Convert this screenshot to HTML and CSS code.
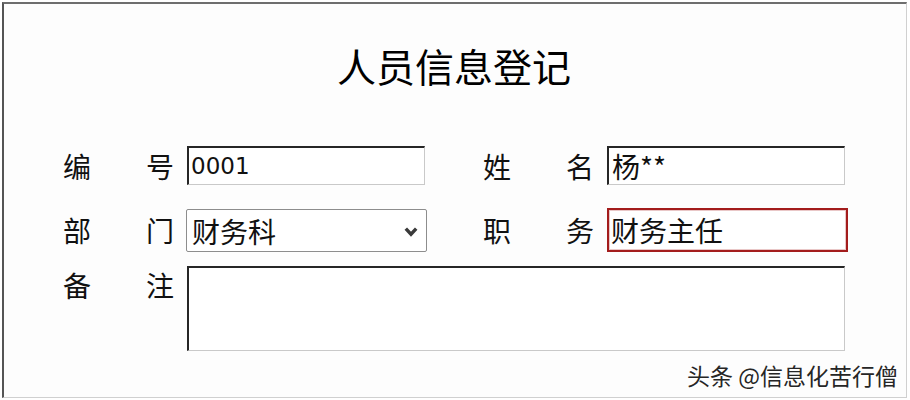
FILE: index.html
```html
<!DOCTYPE html>
<html lang="zh-CN">
<head>
<meta charset="utf-8">
<title>人员信息登记</title>
<link rel="stylesheet" href="styles.css">
</head>
<body>
<div class="frame">
  <h1 class="title">人员信息登记</h1>
  <div class="form">
    <div class="row row-1">
      <div class="label"><span>编</span><span>号</span></div>
      <input class="field field-num" type="text" value="0001">
      <div class="label label-right"><span>姓</span><span>名</span></div>
      <input class="field" type="text" value="杨**">
    </div>
    <div class="row row-2">
      <div class="label"><span>部</span><span>门</span></div>
      <div class="select">
        <span class="select-text">财务科</span>
        <svg class="chevron" width="14" height="12" viewBox="0 0 14 12"><path d="M1.8 2.6 L7 8.2 L12.2 2.6" fill="none" stroke="#3a3a3a" stroke-width="3.4" stroke-linecap="butt" stroke-linejoin="miter"/></svg>
      </div>
      <div class="label label-right2"><span>职</span><span>务</span></div>
      <input class="field field-focus" type="text" value="财务主任">
    </div>
    <div class="row row-3">
      <div class="label label-top"><span>备</span><span>注</span></div>
      <textarea class="notes"></textarea>
    </div>
  </div>
  <div class="watermark">头条 @信息化苦行僧</div>
</div>
</body>
</html>
```

FILE: styles.css
```css
html, body {
  margin: 0;
  padding: 0;
  background: #ffffff;
}

body {
  font-family: "Noto Sans CJK SC", "Noto Sans", sans-serif;
  color: #111111;
}

.frame {
  position: relative;
  box-sizing: border-box;
  width: 905px;
  height: 396px;
  margin: 2px 3px 2px 2px;
  border-top: 2px solid #6e6e6e;
  border-left: 2px solid #555555;
  border-right: 1px solid #d0d0d0;
  border-bottom: 1px solid #d0d0d0;
  background: #fdfdfd;
  padding: 42px 0 0 59px;
}

.title {
  margin: 0;
  font-size: 39px;
  line-height: 39px;
  font-weight: 400;
  color: #000;
  text-align: center;
  width: 782px;
  letter-spacing: 0;
}

.form {
  margin-top: 61px;
}

.row {
  display: flex;
  align-items: center;
}

.row-1 {
  height: 39px;
}

.row-2 {
  height: 44px;
  margin-top: 23px;
}

.row-3 {
  margin-top: 14px;
  align-items: flex-start;
}

.label {
  width: 111px;
  display: flex;
  justify-content: space-between;
  font-size: 28px;
  line-height: 38px;
  color: #111;
  flex: none;
}

.label-top {
  margin-top: 0;
}

.row-1 .label:first-child,
.row-3 .label:first-child {
  margin-right: 13px;
}

.row-2 .label:first-child {
  margin-right: 12px;
}

.label-right {
  margin-left: 58px;
  margin-right: 13px;
}

.label-right2 {
  margin-left: 56px;
  margin-right: 13px;
}

.field {
  box-sizing: border-box;
  width: 238px;
  height: 39px;
  margin: 0;
  padding: 0 0 0 3px;
  border-top: 2px solid #262626;
  border-left: 2px solid #262626;
  border-right: 1px solid #c9c9c9;
  border-bottom: 1px solid #c9c9c9;
  background: #ffffff;
  font-family: "Noto Sans CJK SC", sans-serif;
  font-size: 28px;
  color: #111;
  outline: none;
  flex: none;
}

.field-num {
  font-family: "DejaVu Sans", "Noto Sans CJK SC", sans-serif;
  font-size: 23px;
  padding-left: 2px;
}

.field-focus {
  width: 241px;
  height: 44px;
  border: 2px solid #a31c1c;
  box-shadow: inset 0 0 0 1px #e9c7c7;
  padding-left: 2px;
}

.select {
  box-sizing: border-box;
  width: 241px;
  height: 43px;
  margin-top: 1px;
  border: 1px solid #8d8d8d;
  border-radius: 2px;
  background: #ffffff;
  display: flex;
  align-items: center;
  justify-content: space-between;
  padding: 0 8px 0 5px;
  flex: none;
}

.select-text {
  font-size: 28px;
  line-height: 40px;
  color: #111;
}

.chevron {
  display: block;
  margin-top: 2px;
}

.notes {
  box-sizing: border-box;
  width: 658px;
  height: 85px;
  margin: 0;
  padding: 2px;
  border-top: 2px solid #262626;
  border-left: 2px solid #262626;
  border-right: 1px solid #c9c9c9;
  border-bottom: 1px solid #c9c9c9;
  background: #ffffff;
  resize: none;
  outline: none;
  display: block;
  flex: none;
}

.watermark {
  position: absolute;
  top: 360px;
  right: 8px;
  font-size: 23px;
  line-height: 23px;
  color: #262626;
  white-space: nowrap;
  text-shadow: 1px 1px 0 #ffffff, -1px 0 0 #ffffff;
}
```
